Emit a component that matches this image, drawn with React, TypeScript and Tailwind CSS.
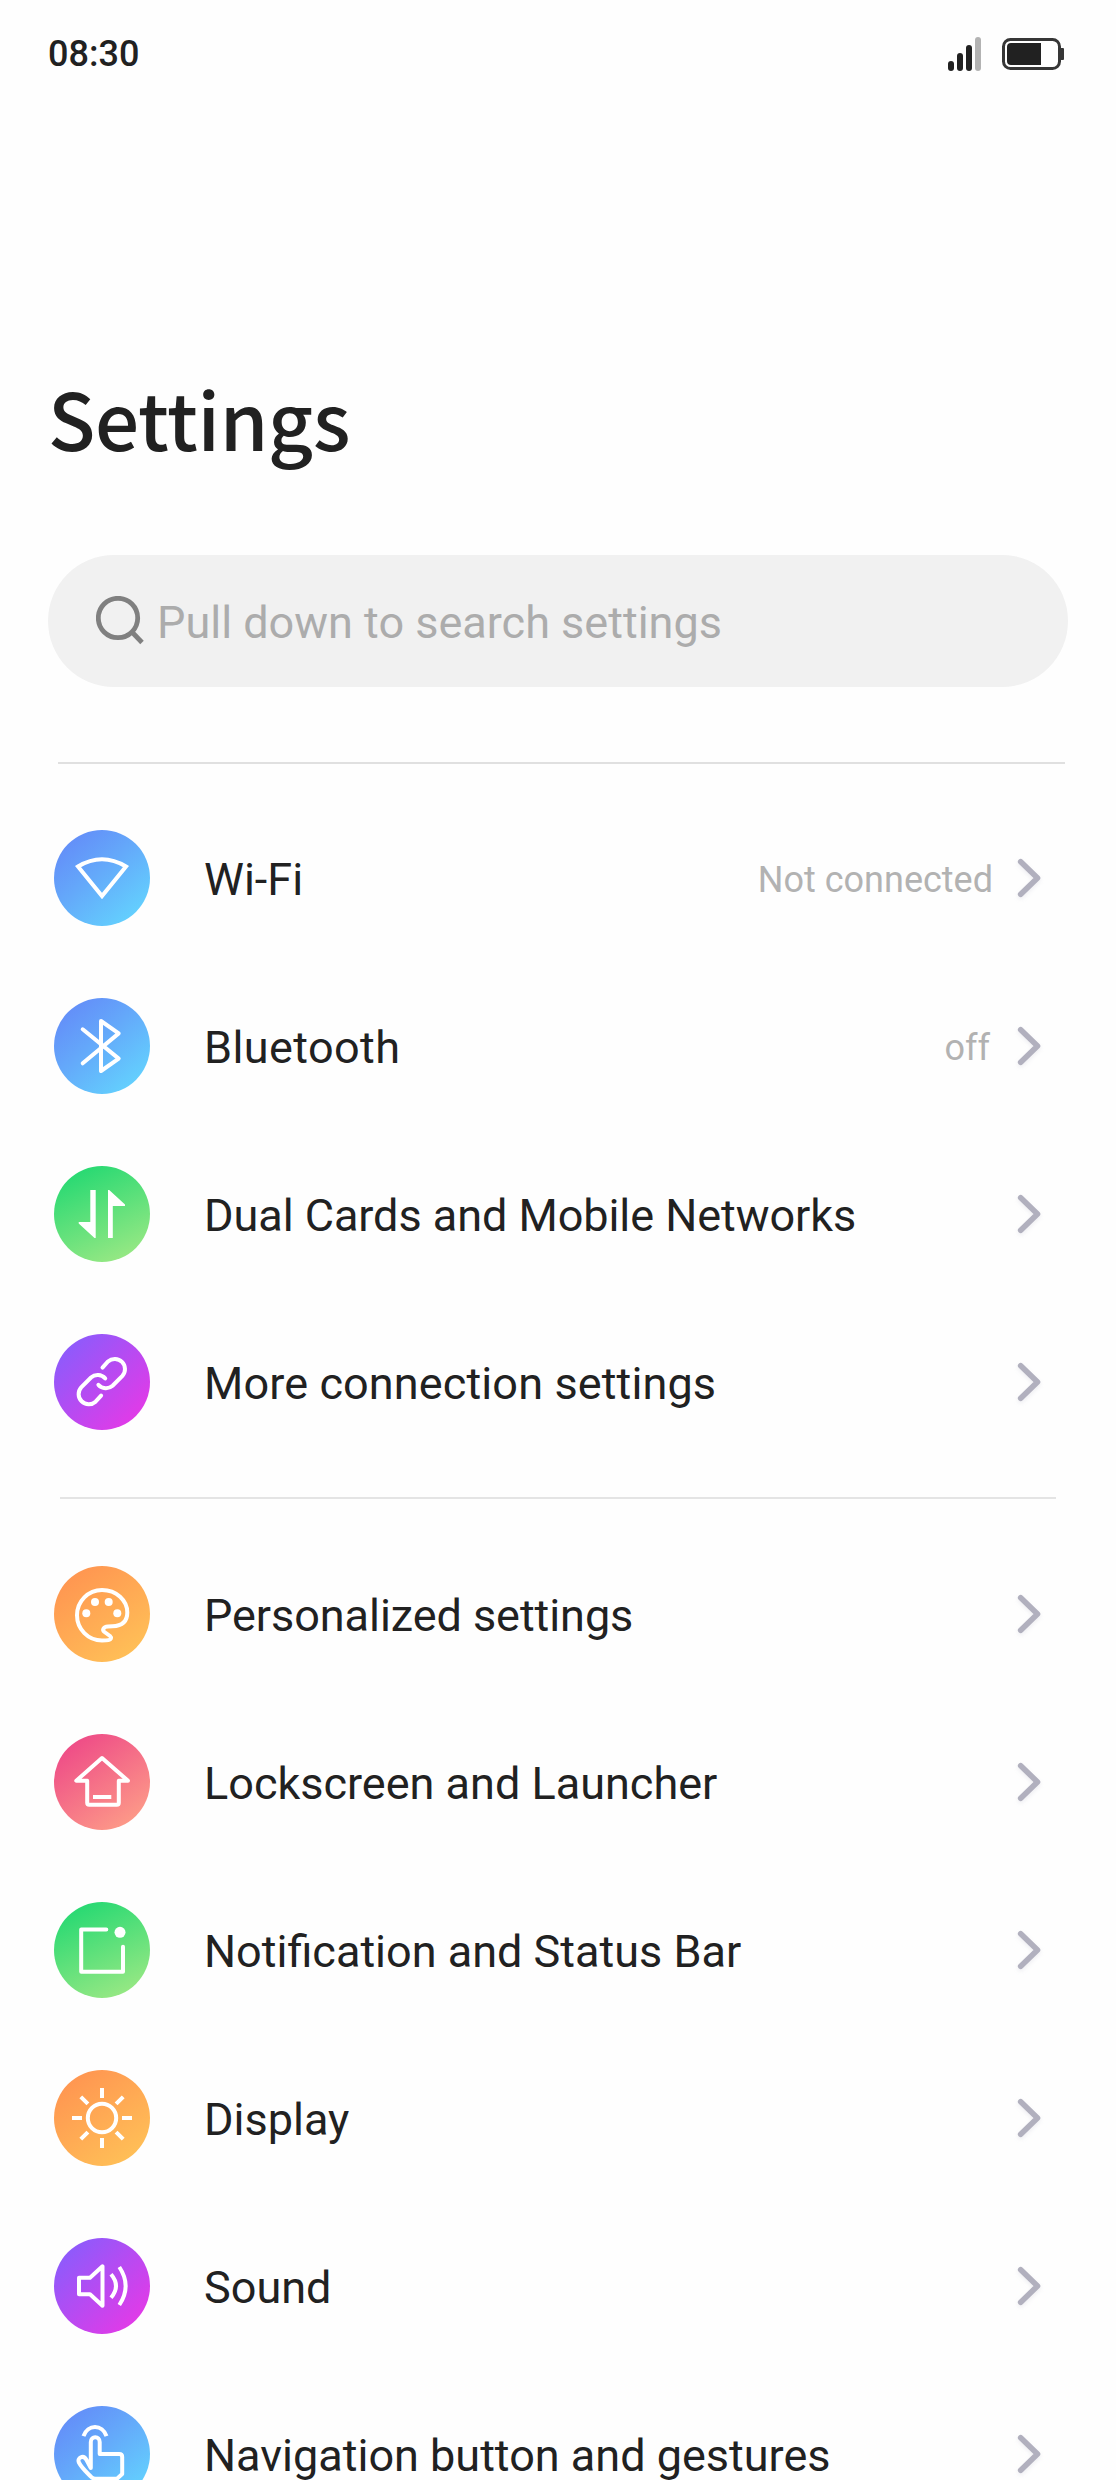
import React from "react";

const stroke = {
  fill: "none",
  stroke: "#fff",
  strokeWidth: 4,
} as const;

const WifiIcon = () => <path {...stroke} d="M24 36.5Q48 22 72 36.5L48 66Z" />;

const BluetoothIcon = () => (
  <path {...stroke} strokeLinecap="round" strokeLinejoin="round" d="M28.7 31.3L64.7 60.6L47 73V23L64.7 35.4L28.7 65.3" />
);

const DataIcon = () => (
  <path fill="#fff" d="M36.3 24H41.7V72H40.5L24.7 57.5V56H36.3ZM54 24H55.2L71 38.6V40H58.8V72H54Z" />
);

const LinkIcon = () => (
  <g {...stroke} strokeLinecap="round">
    <path d="M48.5 33.6L54 27.5A10.2 10.2 0 0 1 68.4 41.9L58.6 51.7A10.2 10.2 0 0 1 44.4 50.8" />
    <path d="M47.1 61.6L41.6 67.7A10.2 10.2 0 0 1 27.2 53.3L37 43.5A10.2 10.2 0 0 1 51.2 44.4" />
  </g>
);

const PaletteIcon = () => (
  <g>
    <path
      {...stroke}
      strokeLinejoin="round"
      d="M48 74.5A25 25.2 0 0 1 23 49.3A25 25.3 0 0 1 48 24C62.5 24 73.3 34.5 73.3 46.5C73.3 57 66 60 58.5 60.3L54 60.6C49 61 48 64 50.5 66L56 70C58 71.8 57 73.6 54.5 74.1C52.5 74.5 50.5 74.5 48 74.5Z"
    />
    <circle cx="32.3" cy="47.3" r="4" fill="#fff" />
    <circle cx="41" cy="36" r="4" fill="#fff" />
    <circle cx="54.7" cy="36" r="4" fill="#fff" />
    <circle cx="63.3" cy="47.3" r="4" fill="#fff" />
  </g>
);

const HomeIcon = () => (
  <g {...stroke}>
    <path strokeLinejoin="round" d="M48 24L22.3 46.7H33.2V68.8Q33.2 70.7 35.2 70.7H62.8Q64.8 70.7 64.8 68.8V46.7H74Z" />
    <path d="M39 63H57.3" />
  </g>
);

const NotificationIcon = () => (
  <g>
    <path {...stroke} strokeLinecap="round" strokeLinejoin="round" d="M52.3 27.4H27.2V69.7H69V44.8" />
    <circle cx="66" cy="30.3" r="5.5" fill="#fff" />
  </g>
);

const SunIcon = () => (
  <g {...stroke}>
    <circle cx="48" cy="48" r="14.2" />
    <path d="M48 18V28M48 68V78M18 48H28M68 48H78M26.8 26.8L33.9 33.9M62.1 62.1L69.2 69.2M26.8 69.2L33.9 62.1M62.1 33.9L69.2 26.8" />
  </g>
);

const SoundIcon = () => (
  <g {...stroke}>
    <path strokeLinejoin="round" d="M25 39.7H36L48.5 28.3V67.7L36 56.2H25Z" />
    <path d="M57 36.3Q67 48 57 59.7M65.3 29Q78 48 65.3 67" />
  </g>
);

const GestureIcon = () => (
  <g {...stroke} strokeLinejoin="round">
    <path d="M29.5 30.2C33.5 18 48.5 18 52.5 30.2" />
    <path d="M36.8 36V62L32.4 53.8C29.5 48.5 22.8 51.5 24.9 56.5C28 62.5 33.5 67 37.5 71.2Q39.2 72.7 41.5 72.7H63L68.2 68V51Q68.2 48 65.2 48H45.7V36C45.7 29.5 36.8 29.5 36.8 36Z" />
  </g>
);

const blue = "bg-[linear-gradient(140deg,#6384f8_0%,#64a9fa_45%,#63dcff_100%)]";
const green = "bg-[linear-gradient(155deg,#18d770_0%,#a6ea86_100%)]";
const purple = "bg-[linear-gradient(135deg,#7f60ff_0%,#f035e4_100%)]";
const orange = "bg-[linear-gradient(145deg,#ff8f50_0%,#ffc658_100%)]";
const pink = "bg-[linear-gradient(145deg,#ec3f87_0%,#ffa688_100%)]";

type Row = {
  label: string;
  labelClass?: string;
  tint: string;
  icon: React.ReactNode;
  value?: string;
  valueClass?: string;
};

const connections: Row[] = [
  { label: "Wi-Fi", tint: blue, icon: <WifiIcon />, value: "Not connected", valueClass: "mr-[23px]" },
  { label: "Bluetooth", labelClass: "tracking-[0.4px]", tint: blue, icon: <BluetoothIcon />, value: "off", valueClass: "mr-[26px]" },
  { label: "Dual Cards and Mobile Networks", labelClass: "tracking-[-0.05px]", tint: green, icon: <DataIcon /> },
  { label: "More connection settings", labelClass: "tracking-[0.12px]", tint: purple, icon: <LinkIcon /> },
];

const device: Row[] = [
  { label: "Personalized settings", labelClass: "tracking-[-0.06px]", tint: orange, icon: <PaletteIcon /> },
  { label: "Lockscreen and Launcher", tint: pink, icon: <HomeIcon /> },
  { label: "Notification and Status Bar", tint: green, icon: <NotificationIcon /> },
  { label: "Display", tint: orange, icon: <SunIcon /> },
  { label: "Sound", tint: purple, icon: <SoundIcon /> },
  { label: "Navigation button and gestures", tint: blue, icon: <GestureIcon /> },
];

function SettingRow({ label, labelClass = "", tint, icon, value, valueClass = "" }: Row) {
  return (
    <li className="flex h-[168px] items-center pl-[54px] pr-[74px]">
      <span className={`size-24 shrink-0 overflow-hidden rounded-full ${tint}`}>
        <svg viewBox="0 0 96 96" className="size-24">
          {icon}
        </svg>
      </span>
      <span className={`ml-[54px] flex-1 whitespace-nowrap pt-[3px] text-[45px] leading-[54px] text-[#212121] ${labelClass}`}>
        {label}
      </span>
      {value && (
        <span className={`whitespace-nowrap pt-[3px] text-[36px] leading-[44px] text-[#b2b2b2] ${valueClass}`}>{value}</span>
      )}
      <svg viewBox="0 0 26 42" className="h-[42px] w-[26px] shrink-0 drop-shadow-[0_2px_2px_rgba(140,140,170,0.15)]">
        <path d="M4.7 4.7L21.5 21L4.7 37.3" fill="none" stroke="#b1b0be" strokeWidth="5.6" strokeLinecap="round" strokeLinejoin="round" />
      </svg>
    </li>
  );
}

function StatusBar() {
  return (
    <header className="flex h-[108px] items-center justify-between pl-12 pr-[52px]">
      <span className="text-[36px] font-medium leading-[42px] text-[#212121]">08:30</span>
      <svg viewBox="0 0 116 34" className="h-[34px] w-[116px]">
        <rect x="0" y="24" width="6" height="10" rx="3" fill="#212121" />
        <rect x="9" y="16" width="6" height="18" rx="3" fill="#212121" />
        <rect x="18" y="8" width="6" height="26" rx="3" fill="#212121" />
        <rect x="27" y="0" width="6" height="34" rx="3" fill="#b3b3b3" />
        <rect x="55.5" y="2.5" width="56" height="29" rx="7" fill="none" stroke="#363636" strokeWidth="3" />
        <path d="M113 11h2q1 0 1 1v10q0 1-1 1h-2z" fill="#363636" />
        <path d="M63 6H93V28H63Q59 28 59 24V10Q59 6 63 6Z" fill="#212121" />
      </svg>
    </header>
  );
}

export default function App() {
  return (
    <div className="h-[2480px] w-[1116px] overflow-hidden bg-[#fefefe] font-['Roboto',sans-serif]">
      <StatusBar />
      <h1 className="ml-12 mt-[251px] text-[78px] font-medium leading-[116px] tracking-[-0.3px] text-[#212121] font-['Noto_Sans_CJK_SC',sans-serif]">
        Settings
      </h1>
      <div className="mx-12 mt-20 flex h-[132px] items-center rounded-full bg-[#f1f1f1] pl-12">
        <svg viewBox="0 0 50 50" className="size-[50px]">
          <circle cx="22" cy="22" r="19.7" fill="none" stroke="#808080" strokeWidth="4.8" />
          <path d="M35.5 35.5L46 46.5" stroke="#808080" strokeWidth="4.8" />
        </svg>
        <span className="ml-[11px] whitespace-nowrap pt-[3px] text-[45px] leading-[54px] text-[#acacac]">
          Pull down to search settings
        </span>
      </div>
      <hr className="ml-[58px] mr-[51px] mt-[75px] h-[2px] border-0 bg-[#e0e0e0]" />
      <ul className="mt-[30px]">
        {connections.map((row) => (
          <SettingRow key={row.label} {...row} />
        ))}
      </ul>
      <hr className="ml-[60px] mr-[60px] mt-[31px] h-[2px] border-0 bg-[#e4e4e4]" />
      <ul className="mt-[31px]">
        {device.map((row) => (
          <SettingRow key={row.label} {...row} />
        ))}
      </ul>
    </div>
  );
}
